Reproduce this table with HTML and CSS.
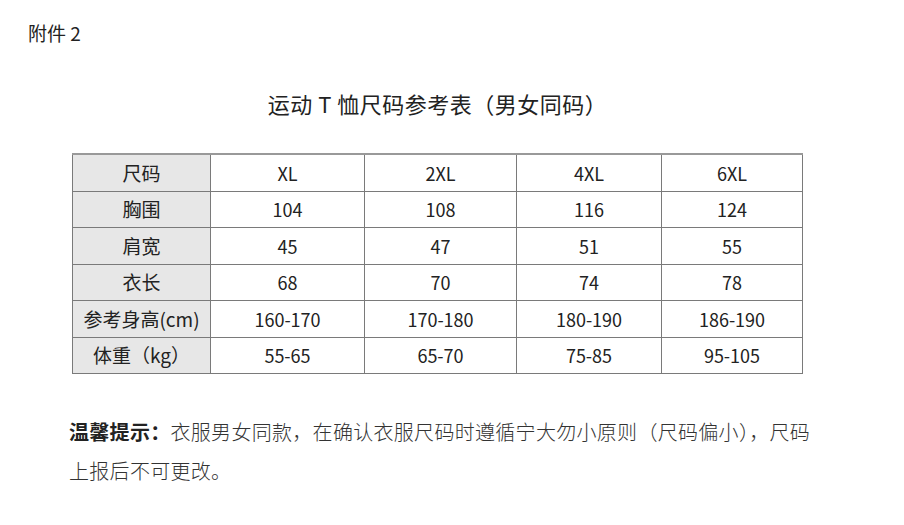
FILE: index.html
```html
<!DOCTYPE html>
<html lang="zh-CN">
<head>
<meta charset="utf-8">
<link rel="stylesheet" href="styles.css">
</head>
<body>
<div class="page">
  <div class="annex">附件 2</div>
  <div class="content">
    <h1 class="title">运动 T 恤尺码参考表（男女同码）</h1>
    <table class="sizes">
      <tr><td class="label">尺码</td><td>XL</td><td>2XL</td><td>4XL</td><td>6XL</td></tr>
      <tr><td class="label">胸围</td><td>104</td><td>108</td><td>116</td><td>124</td></tr>
      <tr><td class="label">肩宽</td><td>45</td><td>47</td><td>51</td><td>55</td></tr>
      <tr><td class="label">衣长</td><td>68</td><td>70</td><td>74</td><td>78</td></tr>
      <tr><td class="label">参考身高(cm)</td><td>160-170</td><td>170-180</td><td>180-190</td><td>186-190</td></tr>
      <tr><td class="label">体重（kg）</td><td>55-65</td><td>65-70</td><td>75-85</td><td>95-105</td></tr>
    </table>
  </div>
  <p class="note"><span class="tip">温馨提示：</span>衣服男女同款，在确认衣服尺码时遵循宁大勿小原则（尺码偏小），尺码上报后不可更改。</p>
</div>
</body>
</html>
```

FILE: styles.css
```css
html, body {
  margin: 0;
  padding: 0;
  background: #ffffff;
}
body {
  font-family: "Noto Sans CJK SC", "Noto Sans", sans-serif;
  color: #222;
}
.page {
  width: 904px;
  height: 525px;
  position: relative;
}
.annex {
  padding: 20px 0 0 28px;
  font-size: 19px;
  line-height: 26px;
  color: #222;
}
.content {
  margin-left: 72px;
  width: 731px;
}
.title {
  margin: 42px 0 0 0;
  font-size: 22px;
  letter-spacing: 0.5px;
  font-weight: normal;
  line-height: 30px;
  text-align: center;
  color: #222;
}
.sizes {
  margin-top: 35px;
  border-collapse: collapse;
  width: 731px;
  table-layout: fixed;
  font-size: 18px;
  color: #222;
}
.sizes td {
  border: 1px solid #7a7a7a;
  height: 35.5px;
  padding: 0;
  text-align: center;
  vertical-align: middle;
  line-height: 20px;
}
.sizes tr:first-child td {
  border-top: 2px solid #999;
}
.sizes td.label {
  background: #e7e7e7;
  width: 137px;
  font-size: 19px;
}
.sizes td:nth-child(2) { width: 153px; }
.sizes td:nth-child(3) { width: 151px; }
.sizes td:nth-child(4) { width: 144px; }
.note {
  margin: 38px 0 0 69px;
  width: 748px;
  font-size: 20px;
  letter-spacing: 0.3px;
  line-height: 39px;
  font-weight: 300;
  color: #333;
}
.tip {
  font-weight: 700;
  color: #222;
}
```
